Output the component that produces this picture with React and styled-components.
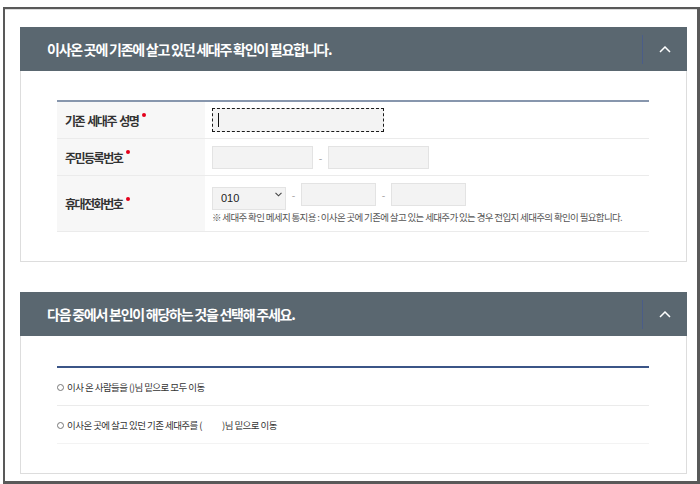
import React from "react"
import styled, { createGlobalStyle } from "styled-components"

const GlobalStyle = createGlobalStyle`
  html, body {
    margin: 0;
    padding: 0;
    background: #fff;
  }
  body {
    font-family: "Noto Sans CJK KR", "Noto Sans", sans-serif;
    color: #333;
  }
  * { box-sizing: border-box; }
`

const Frame = styled.div`
  margin: 7px 0 0 3px;
  width: 697px;
  height: 477px;
  border-style: solid;
  border-color: #595959;
  border-width: 2px 3px 3px 2px;
  box-shadow: inset 0 1px 0 #dcdcdc;
  padding: 18px 0 0 15px;
  overflow: hidden;
`

const Panel = styled.section`
  width: 667px;
  & + & { margin-top: 30px; }
`

const Header = styled.header`
  height: 44px;
  background: #5a6770;
  display: flex;
  align-items: center;
  justify-content: space-between;
  padding-left: 27px;
`

const Title = styled.h2`
  margin: 0;
  font-size: 14px;
  font-weight: 700;
  letter-spacing: -1.25px;
  color: #fff;
`

const Toggle = styled.button`
  width: 45px;
  height: 29px;
  padding: 0;
  border: 0;
  border-left: 1px solid #4a5d88;
  background: transparent;
  display: flex;
  align-items: center;
  justify-content: center;
  cursor: pointer;
`

const Body = styled.div`
  border: 1px solid #dddddd;
  border-top: 0;
  padding: ${p => p.$top}px 37px 29px 36px;
`

const Table = styled.div`
  border-top: 2px solid ${p => p.$line};
`

const Row = styled.div`
  display: flex;
  min-height: ${p => p.$h}px;
  border-bottom: 1px solid #ebebeb;
`

const Label = styled.div`
  width: 148px;
  flex: none;
  background: #f7f7f7;
  padding-left: 8px;
  display: flex;
  align-items: center;
  font-size: 12px;
  font-weight: 700;
  letter-spacing: -1.5px;
  word-spacing: 2px;
  color: #333;
`

const Required = styled.span`
  display: inline-block;
  width: 4px;
  height: 4px;
  border-radius: 50%;
  background: #e4001b;
  margin: -10px 0 0 4px;
`

const Cell = styled.div`
  flex: 1;
  padding: ${p => (p.$stack ? "7px 0 0 7px" : "0 0 0 7px")};
  display: flex;
  flex-direction: column;
  justify-content: ${p => (p.$stack ? "flex-start" : "center")};
  align-items: flex-start;
`

const Line = styled.div`
  display: flex;
  align-items: center;
`

const FieldWrap = styled.div`
  position: relative;
`

const Field = styled.input`
  display: block;
  width: ${p => p.$w}px;
  height: ${p => p.$h || 23}px;
  margin: 0;
  padding: 0 6px;
  background: #f3f3f3;
  border: 1px ${p => (p.$focus ? "dashed #1a1a1a" : "solid #e3e3e3")};
  outline: none;
  font-family: inherit;
  font-size: 11px;
  color: #333;
`

const Caret = styled.span`
  position: absolute;
  left: 6px;
  top: 5px;
  width: 1px;
  height: 14px;
  background: #111;
`

const Dash = styled.span`
  width: 15px;
  text-align: center;
  font-size: 10px;
  color: #999;
`

const SelectWrap = styled.div`
  position: relative;
  width: 74px;
  height: 23px;
`

const Select = styled.select`
  appearance: none;
  width: 100%;
  height: 100%;
  margin: 0;
  padding: 0 0 0 8px;
  background: #f3f3f3;
  border: 1px solid #e3e3e3;
  border-radius: 0;
  font-family: "Liberation Sans", Arial, sans-serif;
  font-size: 11px;
  color: #222;
  outline: none;
`

const Chevron = styled.svg`
  position: absolute;
  right: 4px;
  top: 9px;
  pointer-events: none;
`

const Note = styled.p`
  margin: 5px 0 0;
  font-size: 9.5px;
  letter-spacing: -0.65px;
  color: #555;
  line-height: 12px;
`

const OptionRow = styled.label`
  display: flex;
  align-items: center;
  height: 38px;
  border-bottom: 1px solid ${p => (p.$last ? "#f3f3f3" : "#ebebeb")};
  font-size: 9.5px;
  letter-spacing: -0.55px;
  color: #333;
  cursor: pointer;
`

const Radio = styled.span`
  width: 7px;
  height: 7px;
  border: 1px solid #777;
  border-radius: 50%;
  margin: 1px 3px 0 0;
  flex: none;
`

const Blank = styled.span`
  display: inline-block;
  width: 20px;
`

const Up = () => (
  <svg width="12" height="7" viewBox="0 0 12 7">
    <polyline points="1,6 6,1 11,6" fill="none" stroke="#fff" strokeWidth="1.5" />
  </svg>
)

export default function App() {
  return (
    <>
      <GlobalStyle />
      <Frame>
        <Panel>
          <Header>
            <Title>이사온 곳에 기존에 살고 있던 세대주 확인이 필요합니다.</Title>
            <Toggle aria-label="접기"><Up /></Toggle>
          </Header>
          <Body $top={29}>
            <Table $line="#8796ad">
              <Row $h={37}>
                <Label>기존 세대주 성명<Required /></Label>
                <Cell>
                  <FieldWrap>
                    <Field $w={172} $h={24} $focus />
                    <Caret />
                  </FieldWrap>
                </Cell>
              </Row>
              <Row $h={37}>
                <Label>주민등록번호<Required /></Label>
                <Cell>
                  <Line>
                    <Field $w={101} />
                    <Dash>-</Dash>
                    <Field $w={101} />
                  </Line>
                </Cell>
              </Row>
              <Row $h={56}>
                <Label>휴대전화번호<Required /></Label>
                <Cell $stack>
                  <Line>
                    <SelectWrap>
                      <Select defaultValue="010">
                        <option>010</option>
                        <option>011</option>
                        <option>016</option>
                      </Select>
                      <Chevron width="7" height="5" viewBox="0 0 7 5">
                        <polyline points="0.5,0.8 3.5,3.8 6.5,0.8" fill="none" stroke="#444" strokeWidth="1.1" />
                      </Chevron>
                    </SelectWrap>
                    <Dash>-</Dash>
                    <Field $w={75} />
                    <Dash>-</Dash>
                    <Field $w={75} />
                  </Line>
                  <Note>※ 세대주 확인 메세지 통지용 : 이사온 곳에 기존에 살고 있는 세대주가 있는 경우 전입지 세대주의 확인이 필요합니다.</Note>
                </Cell>
              </Row>
            </Table>
          </Body>
        </Panel>

        <Panel>
          <Header>
            <Title>다음 중에서 본인이 해당하는 것을 선택해 주세요.</Title>
            <Toggle aria-label="접기"><Up /></Toggle>
          </Header>
          <Body $top={30}>
            <Table $line="#3b5587">
              <OptionRow>
                <Radio />이사 온 사람들을 ()님 밑으로 모두 이동
              </OptionRow>
              <OptionRow $last>
                <Radio />이사온 곳에 살고 있던 기존 세대주를 (<Blank />)님 밑으로 이동
              </OptionRow>
            </Table>
          </Body>
        </Panel>
      </Frame>
    </>
  )
}
